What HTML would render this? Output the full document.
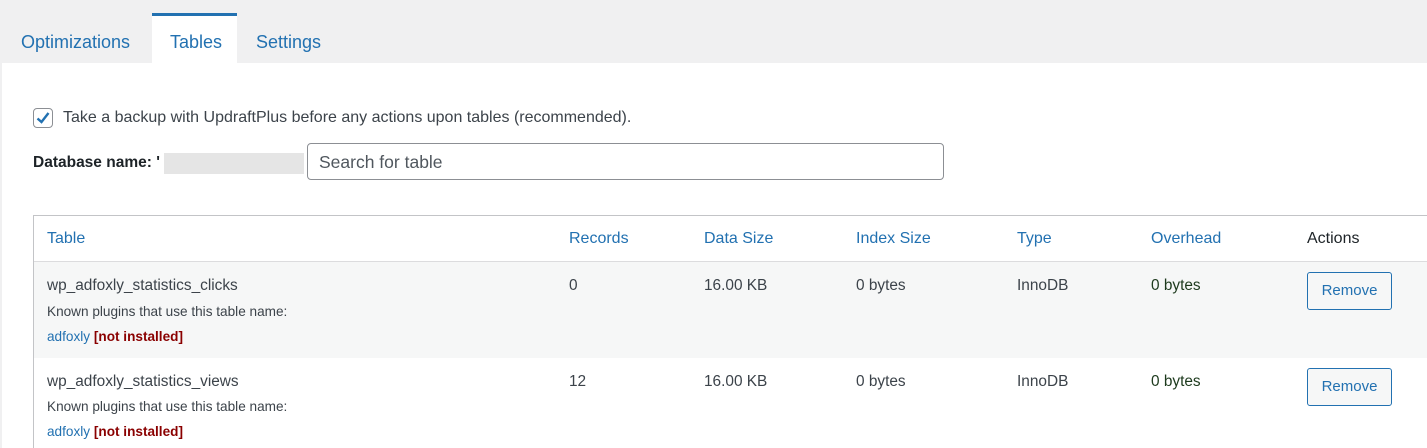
<!DOCTYPE html>
<html><head><meta charset="utf-8"><style>
*{margin:0;padding:0;box-sizing:border-box}
html,body{width:1427px;height:448px;overflow:hidden}
body{background:#f0f0f1;font-family:"Liberation Sans",sans-serif;color:#3c434a;position:relative}
.tab{position:absolute;top:16px;height:47px;font-size:18px;color:#2271b1;line-height:52px}
.main{position:absolute;left:2px;top:63px;width:1425px;height:385px;background:#fff}
.abs{position:absolute}
.th{position:absolute;top:230px;font-size:16px;color:#2271b1}
.c{position:absolute;font-size:15.4px;color:#3c434a}
.btn{position:absolute;left:1307px;width:85px;height:38px;border:1px solid #2271b1;border-radius:3px;background:#f6f7f7;color:#2271b1;font-size:15px;text-align:center;line-height:36px}
.small{position:absolute;left:47px;font-size:13.6px;color:#3c434a}
.a{color:#2271b1}.n{color:#8a0000;font-weight:bold}
</style></head><body>
<div class="abs" style="left:152px;top:13px;width:85px;height:3px;background:#2271b1"></div>
<div class="abs" style="left:152px;top:16px;width:85px;height:47px;background:#fff"></div>
<div class="tab" style="left:21px">Optimizations</div>
<div class="tab" style="left:170px">Tables</div>
<div class="tab" style="left:256px">Settings</div>
<div class="main"></div>
<div class="abs" style="left:33px;top:108px;width:20px;height:20px;border:1px solid #8c8f94;border-radius:4px;background:#fff"></div>
<svg class="abs" style="left:34px;top:109px" width="18" height="18" viewBox="0 0 18 18"><path d="M3.5 9.5 L7.5 13 L14.5 4" fill="none" stroke="#2271b1" stroke-width="2.4"/></svg>
<div class="abs" style="left:63px;top:109px;font-size:16px">Take a backup with UpdraftPlus before any actions upon tables (recommended).</div>
<div class="abs" style="left:33px;top:154px;font-size:15.5px;font-weight:bold;color:#1d2327">Database name: '</div>
<div class="abs" style="left:164px;top:153px;width:140px;height:21px;background:#e5e5e5"></div>
<div class="abs" style="left:307px;top:143px;width:637px;height:37px;border:1px solid #8c8f94;border-radius:4px;background:#fff;padding-left:11px;line-height:36px;font-size:17.5px;color:#50575e">Search for table</div>
<div class="abs" style="left:33px;top:215px;width:1400px;height:240px;border:1px solid #c3c4c7;background:#fff"></div>
<div class="abs" style="left:34px;top:261px;width:1400px;height:1px;background:#dcdcde"></div>
<div class="abs" style="left:34px;top:262px;width:1400px;height:96px;background:#f6f7f7"></div>
<div class="th" style="left:47px">Table</div>
<div class="th" style="left:569px">Records</div>
<div class="th" style="left:704px">Data Size</div>
<div class="th" style="left:856px">Index Size</div>
<div class="th" style="left:1017px;color:#2271b1">Type</div>
<div class="th" style="left:1151px">Overhead</div>
<div class="th" style="left:1307px;color:#1d2327">Actions</div>

<div class="c" style="left:47px;top:277px">wp_adfoxly_statistics_clicks</div>
<div class="small" style="top:304px">Known plugins that use this table name:</div>
<div class="small" style="top:329px"><span class="a">adfoxly</span> <span class="n">[not installed]</span></div>
<div class="c" style="left:569px;top:277px">0</div>
<div class="c" style="left:704px;top:277px">16.00 KB</div>
<div class="c" style="left:856px;top:277px">0 bytes</div>
<div class="c" style="left:1017px;top:277px">InnoDB</div>
<div class="c" style="left:1151px;top:277px;color:#1d3a1d">0 bytes</div>
<div class="btn" style="top:272px">Remove</div>

<div class="c" style="left:47px;top:373px">wp_adfoxly_statistics_views</div>
<div class="small" style="top:399px">Known plugins that use this table name:</div>
<div class="small" style="top:424px"><span class="a">adfoxly</span> <span class="n">[not installed]</span></div>
<div class="c" style="left:569px;top:373px">12</div>
<div class="c" style="left:704px;top:373px">16.00 KB</div>
<div class="c" style="left:856px;top:373px">0 bytes</div>
<div class="c" style="left:1017px;top:373px">InnoDB</div>
<div class="c" style="left:1151px;top:373px;color:#1d3a1d">0 bytes</div>
<div class="btn" style="top:368px">Remove</div>
</body></html>
